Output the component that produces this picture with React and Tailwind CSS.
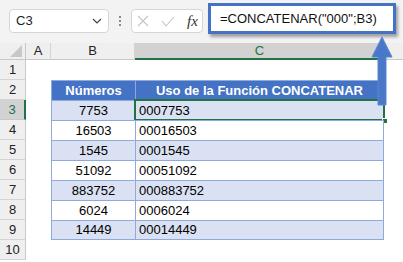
import React from 'react';

const rows = [
  { n: 1 },
  { n: 2, head: true },
  { n: 3, b: '7753', c: '0007753', fill: true, sel: true },
  { n: 4, b: '16503', c: '00016503' },
  { n: 5, b: '1545', c: '0001545', fill: true },
  { n: 6, b: '51092', c: '00051092' },
  { n: 7, b: '883752', c: '000883752', fill: true },
  { n: 8, b: '6024', c: '0006024' },
  { n: 9, b: '14449', c: '00014449', fill: true },
  { n: 10 },
];

const RowHeader = ({ n, sel }) => (
  <div
    className={
      sel
        ? 'w-[26px] h-full shrink-0 flex items-center justify-center bg-[#d2d2d2] text-[#217346] border-b border-[#c8c8c8] border-r-2 border-r-[#217346]'
        : 'w-[26px] h-full shrink-0 flex items-center justify-center bg-[#efefef] text-[#222] border-b border-[#d4d4d4] border-r border-r-[#c8c8c8]'
    }
  >
    {n}
  </div>
);

const SheetRow = ({ r }) => {
  let b = null;
  let c = null;
  if (r.head) {
    b = (
      <div className="w-[84px] h-full shrink-0 flex items-center justify-center bg-[#4472c4] text-white font-bold border-t border-l border-[#8ea9db]">
        Números
      </div>
    );
    c = (
      <div className="w-[249px] h-full shrink-0 flex items-center justify-center bg-[#4472c4] text-white font-bold border-t border-l border-r border-[#8ea9db]">
        Uso de la Función CONCATENAR
      </div>
    );
  } else if (r.b) {
    const bg = r.fill ? 'bg-[#d9e1f2]' : 'bg-white';
    b = (
      <div className={`w-[84px] h-full shrink-0 flex items-center justify-center border-t border-l border-[#8ea9db] ${bg} ${r.n === 9 ? 'border-b' : ''}`}>
        {r.b}
      </div>
    );
    c = (
      <div className={`w-[249px] h-full shrink-0 flex items-center pl-[3px] border-t border-l border-r border-[#8ea9db] ${bg} ${r.n === 9 ? 'border-b' : ''}`}>
        {r.c}
      </div>
    );
  } else {
    b = <div className="w-[84px] h-full shrink-0" />;
    c = <div className="w-[249px] h-full shrink-0" />;
  }
  return (
    <div className="flex h-[20px] relative">
      <RowHeader n={r.n} sel={r.sel} />
      <div className="w-[25px] h-full shrink-0" />
      {b}
      {c}
      <div className="flex-1" />
      {r.sel && (
        <div className="absolute left-[134px] top-[-1px] w-[251px] h-[22px] border-2 border-[#217346] pointer-events-none">
          <div className="absolute right-[-5px] bottom-[-5px] w-[6px] h-[6px] bg-[#217346] border border-white" />
        </div>
      )}
    </div>
  );
};

export default function App() {
  return (
    <div
      className="w-[403px] h-[262px] overflow-hidden relative bg-white text-[13px] text-black"
      style={{ fontFamily: '"Liberation Sans", Arial, sans-serif' }}
    >
      {/* barra de fórmulas */}
      <div className="h-[43px] bg-[#f3f3f3] flex items-start pt-[9px] pl-[9px]">
        <div className="w-[100px] h-[24px] bg-white border border-[#d6d6d6] rounded-[4px] flex items-center pl-[6px] pr-[6px]">
          <span className="flex-1 text-[13px] text-[#222]">C3</span>
          <svg width="10" height="6" viewBox="0 0 10 6">
            <path d="M1 1 L5 5 L9 1" fill="none" stroke="#444" strokeWidth="1.2" />
          </svg>
        </div>
        <div className="w-[22px] h-[24px] flex flex-col items-center justify-center gap-[2px]">
          <div className="w-[2px] h-[2px] bg-[#8a8a8a]" />
          <div className="w-[2px] h-[2px] bg-[#8a8a8a]" />
          <div className="w-[2px] h-[2px] bg-[#8a8a8a]" />
        </div>
        <div className="w-[72px] h-[24px] bg-white border border-[#d6d6d6] rounded-[4px] flex items-center pl-[5px] gap-[12px]">
          <svg width="12" height="12" viewBox="0 0 12 12">
            <path d="M1 1 L11 11 M11 1 L1 11" stroke="#c4c4c4" strokeWidth="1.1" fill="none" />
          </svg>
          <svg width="14" height="11" viewBox="0 0 14 11">
            <path d="M1 5 L5 10 L13 1" stroke="#c4c4c4" strokeWidth="1.1" fill="none" />
          </svg>
          <span
            className="italic text-[15px] text-[#333] leading-none"
            style={{ fontFamily: '"Liberation Serif", serif' }}
          >
            fx
          </span>
        </div>
        <div className="ml-[5px] mt-[-6px] w-[188px] h-[31px] bg-white border-[3px] border-[#4472c4] shadow-[2px_3px_3px_rgba(0,0,0,0.35)] flex items-center pl-[9px] text-[13px] text-[#111]">
          =CONCATENAR("000";B3)
        </div>
      </div>

      {/* encabezados de columna */}
      <div className="flex h-[17px] bg-[#efefef] text-[13px] text-[#222]">
        <div className="w-[26px] h-full shrink-0 border-r border-[#c8c8c8] border-b border-b-[#c8c8c8] flex items-end justify-end pr-[3px] pb-[2px]">
          <svg width="12" height="12" viewBox="0 0 12 12">
            <path d="M12 0 L12 12 L0 12 Z" fill="#c8c8c8" />
          </svg>
        </div>
        <div className="w-[25px] h-full shrink-0 border-r border-[#d4d4d4] border-b border-b-[#c8c8c8] flex items-center justify-center">A</div>
        <div className="w-[84px] h-full shrink-0 border-r border-[#d4d4d4] border-b border-b-[#c8c8c8] flex items-center justify-center">B</div>
        <div className="w-[249px] h-full shrink-0 bg-[#d2d2d2] text-[#217346] border-b-2 border-[#217346] flex items-center justify-center">C</div>
        <div className="flex-1 h-full border-b border-[#c8c8c8]" />
      </div>

      {/* hoja */}
      <div className="flex flex-col">
        {rows.map((r) => (
          <SheetRow key={r.n} r={r} />
        ))}
      </div>

      {/* flecha */}
      <svg className="absolute left-[368px] top-[34px]" width="28" height="74" viewBox="0 0 28 74">
        <path
          d="M14 3 L24 23 L18 23 L18 71 L10 71 L10 23 L4 23 Z"
          fill="#4a78c8"
          stroke="#5b86d0"
          strokeWidth="1"
        />
      </svg>
    </div>
  );
}
